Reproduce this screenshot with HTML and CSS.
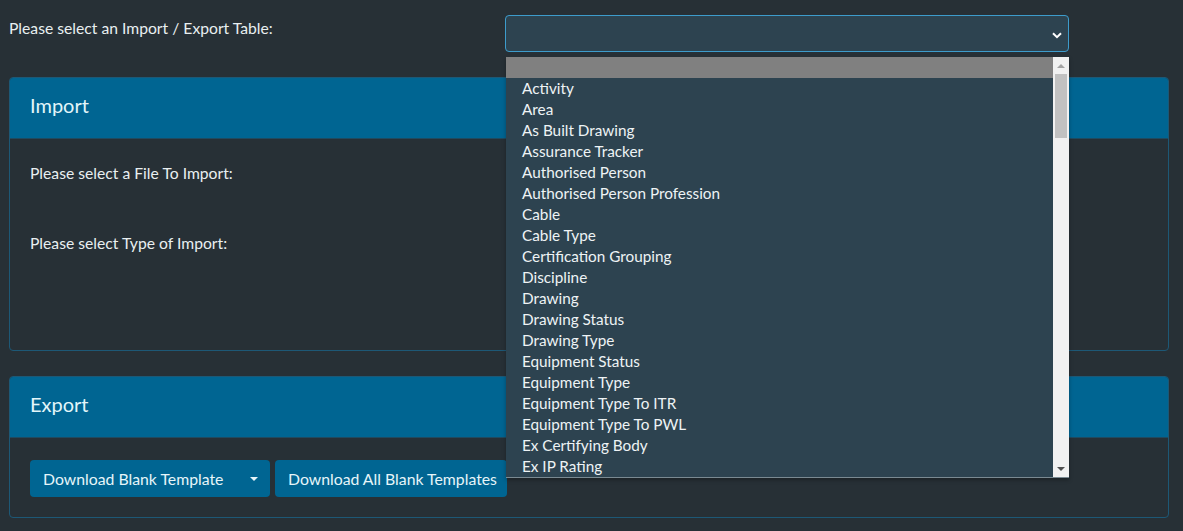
FILE: index.html
```html
<!DOCTYPE html>
<html>
<head>
<meta charset="utf-8">
<link rel="stylesheet" href="styles.css">
</head>
<body>
<div class="page">
  <div class="top-row">
    <label class="top-label">Please select an Import / Export Table:</label>
    <div class="select-wrap">
      <div class="select-box">
        <svg class="chev" width="10" height="7" viewBox="0 0 10 7"><path d="M1 1.2 L5 5.2 L9 1.2" fill="none" stroke="#ffffff" stroke-width="2"/></svg>
      </div>
      <div class="dropdown">
        <div class="options">
          <div class="opt blank"></div>
          <div class="opt">Activity</div>
          <div class="opt">Area</div>
          <div class="opt">As Built Drawing</div>
          <div class="opt">Assurance Tracker</div>
          <div class="opt">Authorised Person</div>
          <div class="opt">Authorised Person Profession</div>
          <div class="opt">Cable</div>
          <div class="opt">Cable Type</div>
          <div class="opt">Certification Grouping</div>
          <div class="opt">Discipline</div>
          <div class="opt">Drawing</div>
          <div class="opt">Drawing Status</div>
          <div class="opt">Drawing Type</div>
          <div class="opt">Equipment Status</div>
          <div class="opt">Equipment Type</div>
          <div class="opt">Equipment Type To ITR</div>
          <div class="opt">Equipment Type To PWL</div>
          <div class="opt">Ex Certifying Body</div>
          <div class="opt">Ex IP Rating</div>
        </div>
        <div class="scrollbar">
          <div class="arrow up"></div>
          <div class="track"><div class="thumb"></div></div>
          <div class="arrow down"></div>
        </div>
      </div>
    </div>
  </div>

  <div class="card import-card">
    <div class="card-header">Import</div>
    <div class="card-body">
      <div class="form-group">Please select a File To Import:</div>
      <div class="form-group">Please select Type of Import:</div>
    </div>
  </div>

  <div class="card export-card">
    <div class="card-header">Export</div>
    <div class="card-body buttons">
      <button class="btn btn-split">Download Blank Template <span class="caret"></span></button>
      <button class="btn btn-all">Download All Blank Templates</button>
    </div>
  </div>
</div>
</body>
</html>
```
FILE: styles.css
```css
html, body {
  margin: 0;
  padding: 0;
}
body {
  background: #273036;
  color: #e9eff1;
  font-family: Lato, "Open Sans", sans-serif;
  font-size: 15.7px;
  width: 1183px;
  height: 531px;
  overflow: hidden;
}
.page {
  padding: 15px 14px 0 9px;
}
.top-row {
  display: flex;
  align-items: flex-start;
  height: 37px;
}
.top-label {
  width: 496px;
  line-height: 20px;
  padding-top: 3px;
}
.select-wrap {
  position: relative;
  width: 564px;
}
.select-box {
  height: 35px;
  border: 1px solid #3d9ccc;
  border-radius: 4px;
  background: #2d4350;
  display: flex;
  align-items: center;
  justify-content: flex-end;
  padding-right: 6px;
}
.chev {
  margin-top: 3px;
}
.dropdown {
  position: absolute;
  left: 1px;
  top: 42px;
  width: 563px;
  height: 420px;
  background: #2d4350;
  border-bottom: 1px solid #7a8a92;
  display: flex;
  z-index: 5;
  box-shadow: 0 2px 4px rgba(0,0,0,0.3);
  font-size: 15.3px;
}
.options {
  flex: 1;
}
.opt {
  height: 21px;
  line-height: 21px;
  padding-left: 16px;
  color: #eef3f5;
  white-space: nowrap;
}
.opt.blank {
  background: #808080;
}
.scrollbar {
  width: 16px;
  background: #f1f1f1;
  display: flex;
  flex-direction: column;
}
.arrow {
  height: 17px;
  position: relative;
}
.arrow.up::after {
  content: "";
  position: absolute;
  left: 4px;
  top: 7px;
  border-left: 4px solid transparent;
  border-right: 4px solid transparent;
  border-bottom: 4px solid #a3a3a3;
}
.arrow.down::after {
  content: "";
  position: absolute;
  left: 4px;
  top: 7px;
  border-left: 4px solid transparent;
  border-right: 4px solid transparent;
  border-top: 4px solid #505050;
}
.track {
  flex: 1;
  padding: 0 2px;
}
.thumb {
  height: 64px;
  background: #c1c1c1;
}
.card {
  border: 1px solid #1d5876;
  border-radius: 4px;
  overflow: hidden;
  margin-top: 25px;
}
.card-header {
  background: #006592;
  color: #e3f6fa;
  font-size: 20px;
  height: 60px;
  line-height: 55px;
  padding-left: 20px;
  border-bottom: 1px solid #1f4a60;
}
.import-card .card-body {
  height: 211px;
  padding: 24px 20px 0;
  box-sizing: border-box;
}
.form-group {
  line-height: 20px;
  height: 70px;
}
.buttons {
  display: flex;
  gap: 5px;
  padding: 22px 20px 20px;
}
.btn {
  font-family: Lato, "Open Sans", sans-serif;
  font-size: 15.8px;
  color: #e6f5f9;
  background: #006592;
  border: none;
  border-radius: 4px;
  height: 37px;
  padding: 0 13px;
  display: flex;
  align-items: center;
  white-space: nowrap;
  box-sizing: border-box;
}
.btn-split {
  width: 240px;
  justify-content: space-between;
  padding-right: 12px;
}
.btn-all {
  width: 232px;
  justify-content: flex-start;
}
.caret {
  width: 0;
  height: 0;
  border-left: 4px solid transparent;
  border-right: 4px solid transparent;
  border-top: 4px solid #e6f5f9;
}
```
